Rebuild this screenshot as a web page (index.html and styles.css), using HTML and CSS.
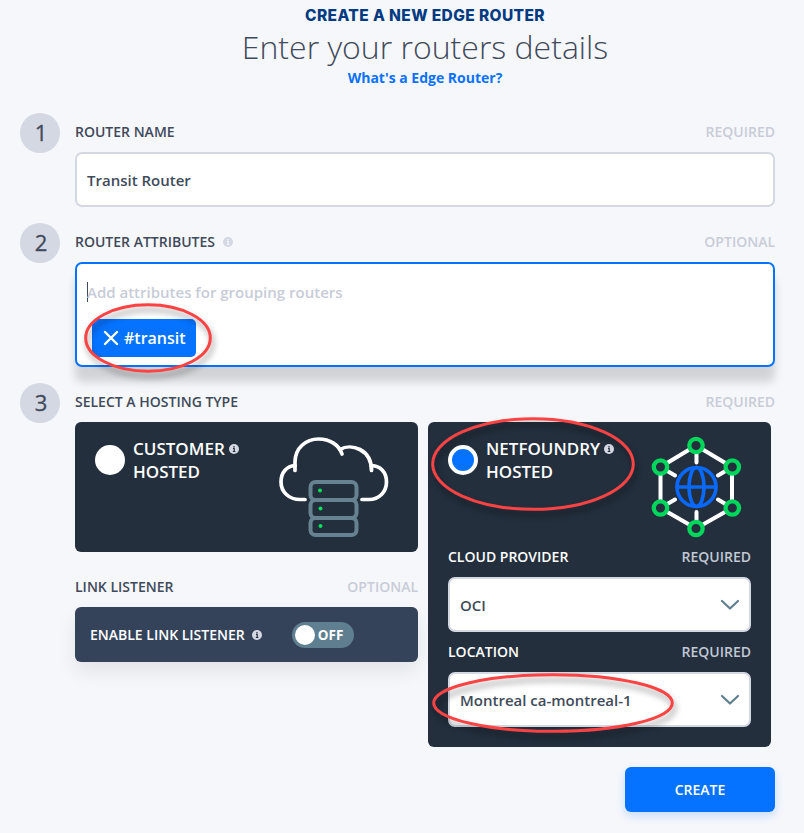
FILE: index.html
```html
<!DOCTYPE html>
<html lang="en">
<head>
<meta charset="utf-8">
<title>Create a New Edge Router</title>
<link rel="stylesheet" href="styles.css">
</head>
<body>
<svg class="defs" aria-hidden="true">
  <symbol id="info" viewBox="0 0 10 10"><circle cx="5" cy="5" r="5" fill="currentColor"/><path class="info-mark" d="M4 4.3h1.2v3M3.800 7.500h2.600M5 2v1.300"/></symbol>
  <symbol id="chevron" viewBox="0 0 20 12"><path d="M2 2l8 7.500 8-7.500" fill="none" stroke="#5f7f90" stroke-width="2.200" stroke-linecap="round" stroke-linejoin="round"/></symbol>
</svg>
<main class="page">
  <header class="head">
    <h1 class="title">CREATE A NEW EDGE ROUTER</h1>
    <p class="subtitle">Enter your routers details</p>
    <a class="help">What's a Edge Router?</a>
  </header>

  <section class="step">
    <div class="num">1</div>
    <div class="content">
      <div class="label"><span>ROUTER NAME</span><span class="hint">REQUIRED</span></div>
      <div class="field">Transit Router</div>
    </div>
  </section>

  <section class="step">
    <div class="num">2</div>
    <div class="content">
      <div class="label"><span>ROUTER ATTRIBUTES</span><svg class="info muted"><use href="#info"/></svg><span class="hint">OPTIONAL</span></div>
      <div class="attributes">
        <div class="placeholder">Add attributes for grouping routers</div>
        <div class="tag"><svg class="cross" viewBox="0 0 16 16"><path d="M2 2l12 12M14 2L2 14"/></svg>#transit</div>
        <svg class="ring ring-tag" viewBox="0 0 128 70"><ellipse cx="64" cy="35" rx="62.3" ry="33.3"/></svg>
      </div>
    </div>
  </section>

  <section class="step">
    <div class="num">3</div>
    <div class="content">
      <div class="label"><span>SELECT A HOSTING TYPE</span><span class="hint">REQUIRED</span></div>
      <div class="hosting">
        <div class="column">
          <div class="card customer">
            <div class="choice">
              <span class="radio"></span>
              <span class="name">CUSTOMER<svg class="info"><use href="#info"/></svg><br>HOSTED</span>
              <svg class="cloud" viewBox="0 0 112 104">
                <g fill="none" stroke="#fff" stroke-width="3.700" stroke-linecap="round" stroke-linejoin="round">
                  <path d="M38 63.500H33C22 63.500 14 56 14 46C14 36 20 30 28 29.500"/>
                  <path d="M28 34.500V26C28 12 39 3 51.500 3C63 3 72 9 75 18"/>
                  <path d="M73 13.500C84 7 104.500 13 104.500 34.500V29.500"/>
                  <path d="M104.500 29.500C113.500 30 119.500 36 119.500 46C119.500 56 112 63.500 102 63.500H95"/>
                </g>
                <g fill="none" stroke="#668290" stroke-width="4">
                  <rect x="43.500" y="46" width="46" height="18" rx="5"/><rect x="43.500" y="64" width="46" height="18" rx="5"/><rect x="43.500" y="82" width="46" height="17" rx="5"/>
                </g>
                <g fill="#00e05a"><circle cx="53" cy="54.500" r="2"/><circle cx="53.500" cy="72.500" r="2"/><circle cx="53.500" cy="90" r="2"/></g>
              </svg>
            </div>
          </div>
          <div class="label link-label"><span>LINK LISTENER</span><span class="hint">OPTIONAL</span></div>
          <div class="listener">
            <span>ENABLE LINK LISTENER</span><svg class="info"><use href="#info"/></svg>
            <span class="toggle"><i class="knob"></i>OFF</span>
          </div>
        </div>

        <div class="card netfoundry">
          <div class="choice">
            <span class="radio selected"></span>
            <span class="name">NETFOUNDRY<svg class="info"><use href="#info"/></svg><br>HOSTED</span>
            <svg class="network" viewBox="0 0 120 120">
              <g fill="none" stroke="#fff" stroke-width="4" stroke-linecap="round">
                <path d="M56 20.500L92 42V83L56 103.500L20.500 83V42Z"/>
                <path d="M56.500 20V37.500M56.500 87V104M20.500 42L35 50.500M92 42L78 50.500M20.500 83L35 74.500M92 83L78 74.500"/>
              </g>
              <g fill="#232f3d" stroke="#00d65b" stroke-width="4.300">
                <circle cx="56" cy="20.500" r="6.700"/><circle cx="92.300" cy="42" r="6.700"/><circle cx="92.300" cy="83" r="6.700"/><circle cx="56" cy="103.500" r="6.700"/><circle cx="20.500" cy="83" r="6.700"/><circle cx="20.500" cy="42" r="6.700"/>
              </g>
              <g fill="none" stroke="#0869fc" stroke-width="3.700"><circle cx="56.500" cy="62" r="19.500"/><ellipse cx="56.500" cy="62" rx="7.500" ry="19.500"/><path d="M37 62H76"/></g>
            </svg>
          </div>
          <div class="label"><span>CLOUD PROVIDER</span><span class="hint">REQUIRED</span></div>
          <div class="field select">OCI<svg class="chevron"><use href="#chevron"/></svg></div>
          <div class="label"><span>LOCATION</span><span class="hint">REQUIRED</span></div>
          <div class="field select location">Montreal ca-montreal-1<svg class="chevron"><use href="#chevron"/></svg></div>
          <svg class="ring ring-host" viewBox="0 0 204 94"><ellipse cx="102" cy="47" rx="100.300" ry="45.300"/></svg>
          <svg class="ring ring-location" viewBox="0 0 242 60"><ellipse cx="121" cy="30" rx="119.300" ry="28.300"/></svg>
        </div>
      </div>
      <div class="actions"><button class="create">CREATE</button></div>
    </div>
  </section>
</main>
</body>
</html>
```

FILE: styles.css
```css
* { box-sizing: border-box; }
body { margin: 0; background: #f6f7fb; color: #404a5a; font: 600 14px/20px "Open Sans", sans-serif; overflow: hidden; }
.defs { display: block; width: 0; height: 0; }
.info-mark { fill: none; stroke: var(--mark, #232f3d); stroke-width: 1.2; }
.page { width: 804px; height: 833px; padding: 5px 29px 0 20px; }
.head { height: 108px; padding-left: 55px; text-align: center; }
.title { margin: 0; font: 800 15.5px/22px Inter, sans-serif; letter-spacing: .4px; color: #003b82; }
.subtitle { margin: 0; font-size: 32px; line-height: 36px; font-weight: 300; padding-top: 2px; height: 41px; }
.help { display: block; color: #0a72ff; font-size: 14px; font-weight: 700; line-height: 20px; }

.step { display: grid; grid-template-columns: 40px 700px; gap: 15px; margin-bottom: 16px; }
.num { width: 40px; height: 40px; border-radius: 50%; background: #d4d8e3; font-size: 22px; line-height: 38px; text-align: center; padding-left: 2px; font-weight: 400; -webkit-text-stroke: .3px #404a5a; }
.label { height: 39px; padding-bottom: 2px; display: flex; align-items: center; font-size: 14px; }
.hint { margin-left: auto; color: #c8ccd7; }
.info { width: 10px; height: 10px; color: #d4d8e3; margin-left: 8px; }
.muted { --mark: #f6f7fb; }
.field { height: 55px; border: 2px solid #d4d8e3; border-radius: 7px; background: #fff; padding: 0 10px; display: flex; align-items: center; font-size: 15px; color: #404a5a; }
.attributes { position: relative; height: 105px; border: 2px solid #0573ff; border-radius: 7px; background: #fff; padding: 18px 10px 0; box-shadow: 0 15px 10px rgba(0,0,0,.15); }
.placeholder { height: 20px; width: 270px; border-left: 1px solid #404a5a; color: #c8ccd7; font-size: 15px; line-height: 20px; text-indent: -1px; }
.tag { display: flex; align-items: center; gap: 5px; width: 104px; height: 38px; margin: 17px 0 0 5px; padding-left: 11px; border-radius: 5px; background: #0573ff; color: #fff; font-size: 16px; }
.cross { width: 16px; height: 16px; fill: none; stroke: #fff; stroke-width: 2.4; stroke-linecap: round; }
.ring { position: absolute; overflow: visible; fill: none; stroke: #fb4343; stroke-width: 3; filter: drop-shadow(2px 5px 3px rgba(0,0,0,.4)); }
.ring-tag { left: 7px; top: 39px; width: 128px; height: 70px; }

.hosting { display: flex; align-items: flex-start; gap: 10px; }
.column { width: 343px; }
.card { width: 343px; border-radius: 6px; background: #232f3d; padding: 0 20px; }
.customer { height: 130px; }
.netfoundry { position: relative; height: 325px; color: #fff; }
.choice { height: 116px; display: flex; padding-top: 15px; position: relative; }
.radio { width: 30px; height: 30px; margin-top: 8px; border-radius: 50%; background: #fff; }
.radio.selected { border: 4.500px solid #fff; background: #0573ff; }
.name { margin-left: 8px; color: #fff; font-size: 17px; line-height: 23px; white-space: nowrap; }
.name .info { margin: 0 0 0 4px; vertical-align: 1px; }
.cloud { position: absolute; overflow: visible; left: 172px; top: 14px; width: 112px; height: 104px; }
.network { position: absolute; left: 192px; top: 3px; width: 120px; height: 120px; }
.netfoundry .label { height: 40px; margin-top: -1px; padding-bottom: 0; }
.netfoundry .field + .label { height: 41px; margin-top: 0; margin-bottom: -1px; padding-bottom: 2px; }
.netfoundry .hint { color: #c2c8d4; }
.select { justify-content: space-between; padding-right: 9px; }
.chevron { width: 20px; height: 12px; }
.ring-host { left: 3px; top: -5px; width: 204px; height: 94px; }
.ring-location { left: 4px; top: 251px; width: 242px; height: 60px; }
.link-label { margin-top: 16px; }
.listener { height: 55px; padding-left: 15px; border-radius: 6px; background: #34435a; color: #fff; display: flex; align-items: center; font-size: 14px; box-shadow: 0 10px 20px rgba(0,0,0,.08); }
.listener .info { margin-left: 7px; }
.toggle { width: 62px; height: 26px; margin-left: 30px; padding-left: 3px; border-radius: 13px; background: #5f7f90; display: flex; align-items: center; gap: 3px; font-size: 13.5px; font-weight: 700; }
.knob { width: 20px; height: 20px; border-radius: 50%; background: #fff; }
.actions { display: flex; justify-content: flex-end; margin-top: 20px; }
.create { width: 150px; height: 45px; border: 0; border-radius: 6px; background: #0573ff; color: #fff; font: 600 14px/20px "Open Sans", sans-serif; box-shadow: 0 4px 10px rgba(5,115,255,.2); }
```
